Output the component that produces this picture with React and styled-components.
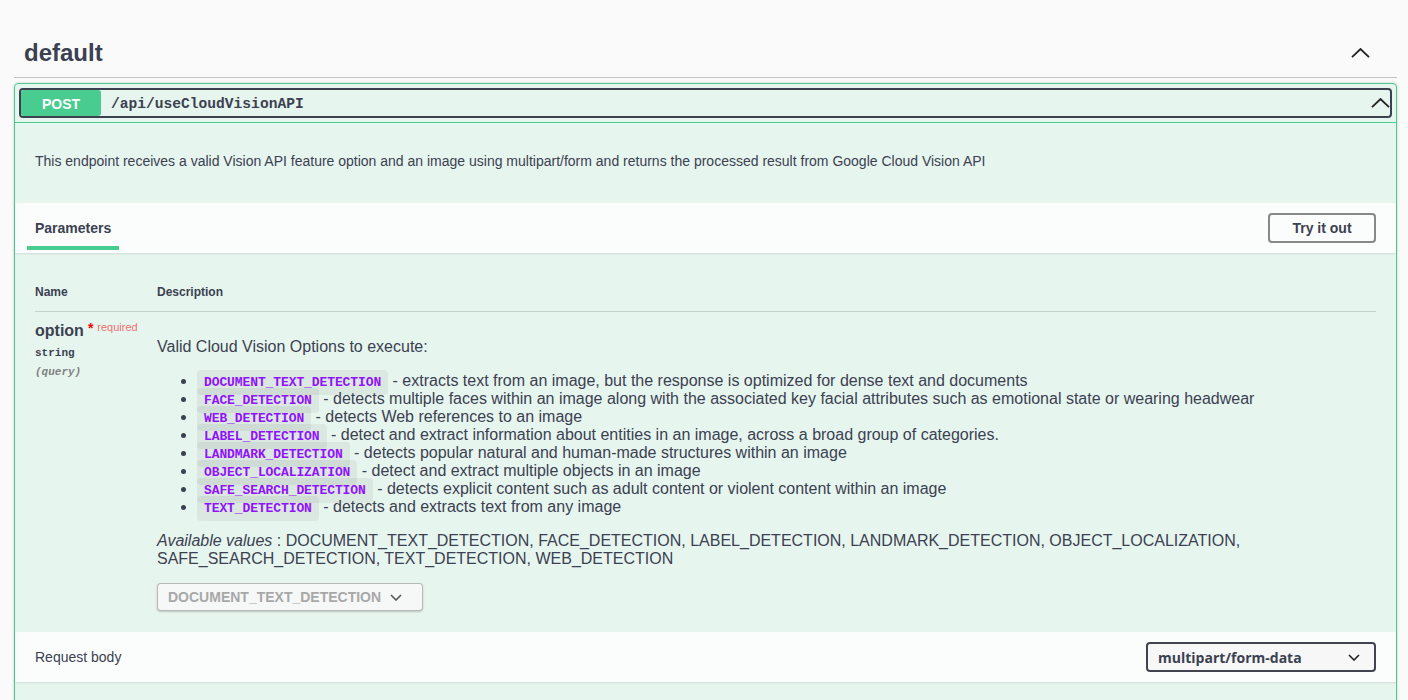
import styled, { createGlobalStyle } from "styled-components";

const GlobalStyle = createGlobalStyle`
  html, body {
    margin: 0;
    background: #fafafa;
    font-family: "Liberation Sans", Arial, sans-serif;
    color: #3b4151;
  }
  * { box-sizing: border-box; }
`;

const Page = styled.div`
  height: 700px;
  overflow: hidden;
  padding: 25px 11px 0 14px;
`;

const TagHeader = styled.div`
  display: flex;
  align-items: center;
  justify-content: space-between;
  padding: 10px 27px 6px 10px;
  border-bottom: 1px solid rgba(59, 65, 81, 0.3);
`;

const TagTitle = styled.h4`
  margin: 0;
  font-size: 24px;
  line-height: 36px;
  font-weight: 700;
  color: #3b4151;
`;

const Chevron = styled.svg`
  width: ${(p) => p.$w || 19}px;
  height: ${(p) => p.$h || 10}px;
  flex: none;
  fill: none;
  stroke: ${(p) => p.$color || "#222"};
  stroke-width: ${(p) => p.$sw || 1.8};
`;

const Opblock = styled.div`
  margin-top: 5px;
  border: 1px solid #49cc90;
  border-radius: 4px;
  background: rgba(73, 204, 144, 0.1);
  box-shadow: 0 0 3px rgba(0, 0, 0, 0.19);
`;

const Summary = styled.div`
  padding: 4px 4px 4px 4px;
  border-bottom: 1px solid #49cc90;
`;

const SummaryControl = styled.div`
  display: flex;
  align-items: center;
  height: 30px;
  border: 2px solid #3b4151;
  border-radius: 4px;
  padding-right: 0;
`;

const Method = styled.span`
  width: 80px;
  height: 26px;
  display: flex;
  align-items: center;
  justify-content: center;
  padding-top: 2px;
  background: #49cc90;
  border-radius: 3px;
  color: #fff;
  font-size: 14px;
  font-weight: 700;
`;

const Path = styled.span`
  flex: 1;
  margin-left: 10px;
  padding-top: 2px;
  font-family: "Liberation Mono", monospace;
  font-size: 14.6px;
  font-weight: 700;
  color: #3b4151;
`;

const Description = styled.div`
  padding: 15px 20px 21px;
  p {
    margin: 15px 0 13px;
    font-size: 14px;
    line-height: 16px;
  }
`;

const SectionHeader = styled.div`
  display: flex;
  align-items: center;
  justify-content: space-between;
  height: 50px;
  padding: 0 20px;
  background: rgba(255, 255, 255, 0.8);
  box-shadow: 0 1px 2px rgba(0, 0, 0, 0.1);
`;

const Tab = styled.div`
  position: relative;
  height: 100%;
  display: flex;
  align-items: center;
  margin-left: -8px;
  padding: 0 8px 1px;
  font-size: 14px;
  font-weight: 700;
  &::after {
    content: "";
    position: absolute;
    left: 0;
    right: 0;
    bottom: 3px;
    height: 4px;
    background: #49cc90;
  }
`;

const TryButton = styled.button`
  width: 108px;
  height: 30px;
  border: 2px solid #888;
  border-radius: 4px;
  background: transparent;
  font-family: "Liberation Sans", Arial, sans-serif;
  font-size: 14px;
  font-weight: 700;
  color: #3b4151;
  padding: 0;
`;

const Table = styled.div`
  padding: 20px 20px 21px;
`;

const Row = styled.div`
  display: grid;
  grid-template-columns: 122px 1fr;
  padding: ${(p) => (p.$head ? "12px 0 12px" : "10px 0 0")};
  border-bottom: ${(p) => (p.$head ? "1px solid rgba(59, 65, 81, 0.2)" : "none")};
  ${(p) =>
    p.$head &&
    `
    font-size: 12px;
    font-weight: 700;
    line-height: 14px;
  `}
`;

const ParamName = styled.div`
  font-size: 16px;
  font-weight: 700;
  line-height: 18px;
  white-space: nowrap;
`;

const Required = styled.span`
  position: relative;
  top: -5px;
  margin-left: 4px;
  font-size: 11px;
  font-weight: 400;
  color: rgba(255, 0, 0, 0.6);
  b {
    font-size: 14px;
    color: red;
    margin-right: 4px;
    position: relative;
    top: 2px;
  }
`;

const ParamType = styled.div`
  margin-top: 5px;
  font-family: "Liberation Mono", monospace;
  font-size: 11px;
  line-height: 14px;
  font-weight: 700;
`;

const ParamIn = styled.div`
  margin-top: 5px;
  font-family: "Liberation Mono", monospace;
  font-size: 11px;
  line-height: 14px;
  font-style: italic;
  font-weight: 700;
  color: gray;
`;

const Markdown = styled.div`
  font-size: 16px;
  line-height: 18px;
  p {
    margin: 16px 0 16px;
  }
  ul {
    margin: 0;
    padding-left: 40px;
  }
  li {
    height: 18px;
  }
`;

const Code = styled.code`
  padding: 5px 7px;
  border-radius: 4px;
  background: rgba(0, 0, 0, 0.05);
  color: #9012fe;
  font-family: "Liberation Mono", monospace;
  font-size: 13px;
  line-height: 13px;
  letter-spacing: -0.1px;
  font-weight: 700;
`;

const Available = styled.p`
  margin: 16px 0 15px;
  font-size: 16px;
  line-height: 18px;
  i { font-style: italic; }
`;

const Select = styled.div`
  display: inline-flex;
  align-items: center;
  justify-content: space-between;
  width: ${(p) => p.$w}px;
  height: ${(p) => p.$h}px;
  padding: 0 ${(p) => p.$pr}px 0 10px;
  border-radius: 4px;
  font-size: 14px;
  font-weight: 700;
  ${(p) =>
    p.$disabled
      ? `
    border: 1px solid rgba(0, 0, 0, 0.25);
    box-shadow: 0 1px 2px rgba(0, 0, 0, 0.2);
    background: #f5f8f7;
    color: #a8a8a8;
  `
      : `
    border: 2px solid #41444e;
    background: #f7f7f7;
    color: #3b4151;
    font-family: "Open Sans", sans-serif;
  `}
`;

const BodyLabel = styled.span`
  font-size: 14px;
`;

const Filler = styled.div`
  height: 60px;
`;

const options = [
  ["DOCUMENT_TEXT_DETECTION", "extracts text from an image, but the response is optimized for dense text and documents"],
  ["FACE_DETECTION", "detects multiple faces within an image along with the associated key facial attributes such as emotional state or wearing headwear"],
  ["WEB_DETECTION", "detects Web references to an image"],
  ["LABEL_DETECTION", "detect and extract information about entities in an image, across a broad group of categories."],
  ["LANDMARK_DETECTION", "detects popular natural and human-made structures within an image"],
  ["OBJECT_LOCALIZATION", "detect and extract multiple objects in an image"],
  ["SAFE_SEARCH_DETECTION", "detects explicit content such as adult content or violent content within an image"],
  ["TEXT_DETECTION", "detects and extracts text from any image"],
];

const Up = (props) => (
  <Chevron viewBox="0 0 19 10" {...props}>
    <path d="M1 9.2 L9.5 1 L18 9.2" />
  </Chevron>
);

const Down = (props) => (
  <Chevron viewBox="0 0 12 7" $w={12} $h={7} $sw={1.6} {...props}>
    <path d="M1 1 L6 6 L11 1" />
  </Chevron>
);

const App = () => {
  return (
    <Page>
      <GlobalStyle />
      <TagHeader>
        <TagTitle>default</TagTitle>
        <Up />
      </TagHeader>
      <Opblock>
        <Summary>
          <SummaryControl>
            <Method>POST</Method>
            <Path>/api/useCloudVisionAPI</Path>
            <Up />
          </SummaryControl>
        </Summary>
        <Description>
          <p>
            This endpoint receives a valid Vision API feature option and an image using multipart/form and returns the processed result from Google Cloud Vision API
          </p>
        </Description>
        <SectionHeader>
          <Tab>Parameters</Tab>
          <TryButton>Try it out</TryButton>
        </SectionHeader>
        <Table>
          <Row $head>
            <span>Name</span>
            <span>Description</span>
          </Row>
          <Row>
            <div>
              <ParamName>
                option
                <Required>
                  <b>*</b>required
                </Required>
              </ParamName>
              <ParamType>string</ParamType>
              <ParamIn>(query)</ParamIn>
            </div>
            <div>
              <Markdown>
                <p>Valid Cloud Vision Options to execute:</p>
                <ul>
                  {options.map(([code, text]) => (
                    <li key={code}>
                      <Code>{code}</Code> - {text}
                    </li>
                  ))}
                </ul>
              </Markdown>
              <Available>
                <i>Available values</i> : DOCUMENT_TEXT_DETECTION, FACE_DETECTION, LABEL_DETECTION, LANDMARK_DETECTION, OBJECT_LOCALIZATION, SAFE_SEARCH_DETECTION, TEXT_DETECTION, WEB_DETECTION
              </Available>
              <Select $disabled $w={266} $h={28} $pr={20}>
                DOCUMENT_TEXT_DETECTION
                <Down $color="#555" />
              </Select>
            </div>
          </Row>
        </Table>
        <SectionHeader>
          <BodyLabel>Request body</BodyLabel>
          <Select $w={230} $h={30} $pr={14}>
            multipart/form-data
            <Down $color="#222" />
          </Select>
        </SectionHeader>
        <Filler />
      </Opblock>
    </Page>
  );
};

export default App;
